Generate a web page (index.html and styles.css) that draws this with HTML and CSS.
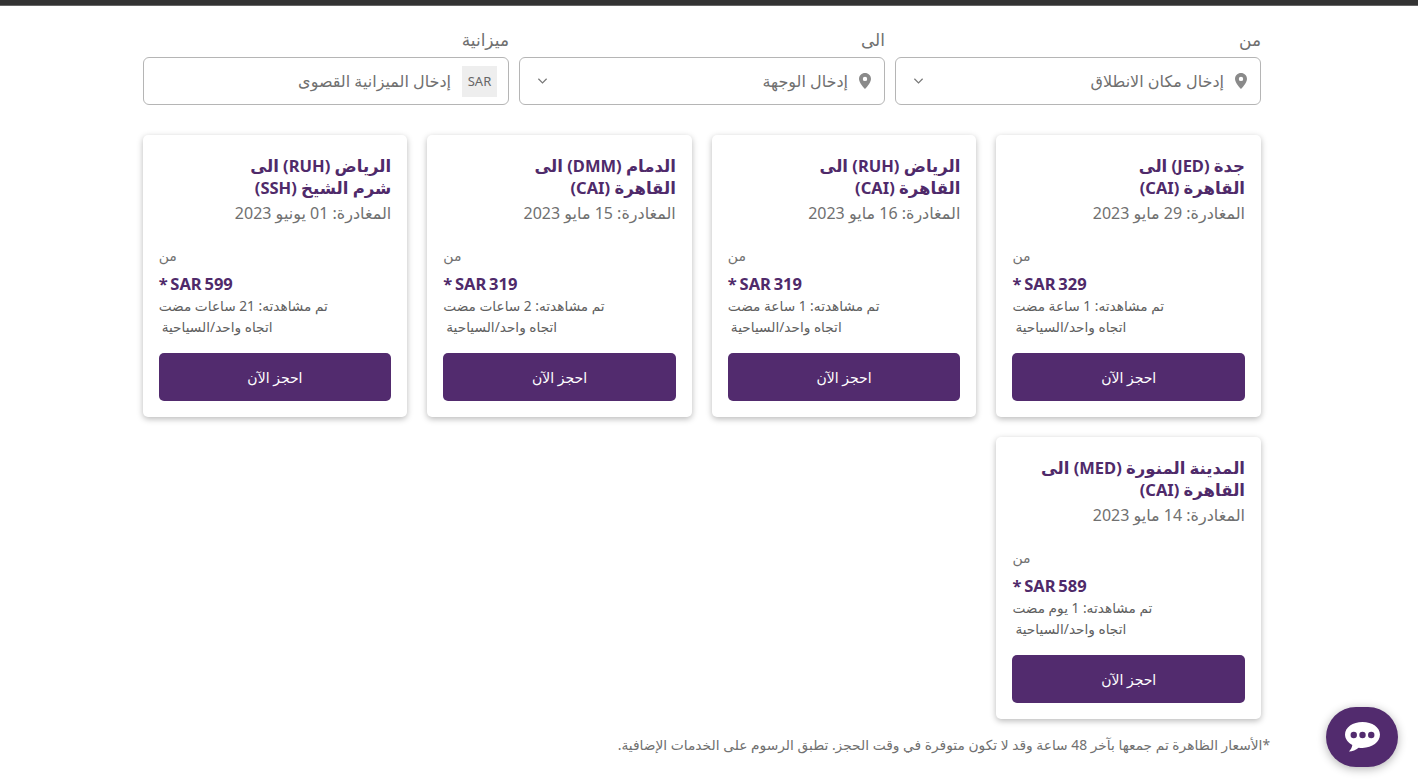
FILE: index.html
```html
<!DOCTYPE html>
<html lang="ar" dir="rtl">
<head>
<meta charset="utf-8">
<title>عروض</title>
<link rel="stylesheet" href="styles.css">
</head>
<body>
<div class="topbar"></div>
<main class="wrap">
  <section class="filters">
    <div class="field">
      <label class="field-label">من</label>
      <div class="input">
        <svg class="pin" viewBox="0 0 12 16"><path d="M6 0C2.7 0 0 2.6 0 5.9 0 10 6 16 6 16s6-6 6-10.100C12 2.600 9.300 0 6 0zm0 8.100a2.200 2.200 0 1 1 0-4.400 2.200 2.200 0 0 1 0 4.400z"/></svg>
        <span class="placeholder">إدخال مكان الانطلاق</span>
        <svg class="chev" viewBox="0 0 12 8"><path d="M1.500 1.500 6 6l4.500-4.500"/></svg>
      </div>
    </div>
    <div class="field">
      <label class="field-label">الى</label>
      <div class="input">
        <svg class="pin" viewBox="0 0 12 16"><path d="M6 0C2.7 0 0 2.6 0 5.9 0 10 6 16 6 16s6-6 6-10.100C12 2.600 9.300 0 6 0zm0 8.100a2.200 2.200 0 1 1 0-4.400 2.200 2.200 0 0 1 0 4.400z"/></svg>
        <span class="placeholder">إدخال الوجهة</span>
        <svg class="chev" viewBox="0 0 12 8"><path d="M1.500 1.500 6 6l4.500-4.500"/></svg>
      </div>
    </div>
    <div class="field">
      <label class="field-label">ميزانية</label>
      <div class="input">
        <span class="currency">SAR</span>
        <span class="placeholder">إدخال الميزانية القصوى</span>
      </div>
    </div>
  </section>

  <section class="cards">
    <article class="card">
      <h3 class="route">جدة (JED) الى<br>القاهرة (CAI)</h3>
      <p class="date">المغادرة: 29 مايو 2023</p>
      <p class="from">من</p>
      <p class="price"><bdi>* SAR 329</bdi></p>
      <p class="meta">تم مشاهدته: 1 ساعة مضت</p>
      <p class="meta trip">اتجاه واحد/السياحية</p>
      <button class="book">احجز الآن</button>
    </article>
    <article class="card">
      <h3 class="route">الرياض (RUH) الى<br>القاهرة (CAI)</h3>
      <p class="date">المغادرة: 16 مايو 2023</p>
      <p class="from">من</p>
      <p class="price"><bdi>* SAR 319</bdi></p>
      <p class="meta">تم مشاهدته: 1 ساعة مضت</p>
      <p class="meta trip">اتجاه واحد/السياحية</p>
      <button class="book">احجز الآن</button>
    </article>
    <article class="card">
      <h3 class="route">الدمام (DMM) الى<br>القاهرة (CAI)</h3>
      <p class="date">المغادرة: 15 مايو 2023</p>
      <p class="from">من</p>
      <p class="price"><bdi>* SAR 319</bdi></p>
      <p class="meta">تم مشاهدته: 2 ساعات مضت</p>
      <p class="meta trip">اتجاه واحد/السياحية</p>
      <button class="book">احجز الآن</button>
    </article>
    <article class="card">
      <h3 class="route">الرياض (RUH) الى<br>شرم الشيخ (SSH)</h3>
      <p class="date">المغادرة: 01 يونيو 2023</p>
      <p class="from">من</p>
      <p class="price"><bdi>* SAR 599</bdi></p>
      <p class="meta">تم مشاهدته: 21 ساعات مضت</p>
      <p class="meta trip">اتجاه واحد/السياحية</p>
      <button class="book">احجز الآن</button>
    </article>
    <article class="card">
      <h3 class="route">المدينة المنورة (MED) الى<br>القاهرة (CAI)</h3>
      <p class="date">المغادرة: 14 مايو 2023</p>
      <p class="from">من</p>
      <p class="price"><bdi>* SAR 589</bdi></p>
      <p class="meta">تم مشاهدته: 1 يوم مضت</p>
      <p class="meta trip">اتجاه واحد/السياحية</p>
      <button class="book">احجز الآن</button>
    </article>
  </section>

  <p class="note">*الأسعار الظاهرة تم جمعها بآخر 48 ساعة وقد لا تكون متوفرة في وقت الحجز. تطبق الرسوم على الخدمات الإضافية.</p>
</main>
<button class="chat" aria-label="chat">
  <svg viewBox="0 0 38 34"><path d="M19 1C9 1 1 6.500 1 14c0 4.500 3 8.300 7.500 10.800-.3 2.500-1.500 4.700-3.500 6.700 3.700-.3 7.200-1.700 10-4 1.300.2 2.600.3 4 .3 10 0 18-6.300 18-13.800S29 1 19 1z" fill="#fff"/><circle cx="10" cy="14.500" r="3.300" fill="#522b6e"/><circle cx="19" cy="14.500" r="3.300" fill="#522b6e"/><circle cx="28" cy="14.500" r="3.300" fill="#522b6e"/></svg>
</button>
</body>
</html>
```
FILE: styles.css
```css
* { box-sizing: border-box; }
html, body { margin: 0; padding: 0; height: 782px; overflow: hidden; background: #fff; }
body { font-family: "Noto Sans", "DejaVu Sans", sans-serif; color: #555; }
p, h3 { margin: 0; }

.topbar { height: 6px; background: #333; border-bottom: 1px solid #666; }

.wrap { width: 1118px; margin: 0 157px 0 143px; padding-top: 24px; }

.filters { display: grid; grid-template-columns: repeat(3, 366px); gap: 10px; }
.field-label { display: block; height: 27px; font-size: 17px; line-height: 20px; color: #707070; }
.input { height: 48px; display: flex; align-items: center; gap: 11px; padding: 0 13px; border: 1px solid #b5b5b5; border-radius: 6px; background: #fff; }
.pin { width: 12px; height: 16px; flex: none; fill: #8a8a8a; }
.placeholder { font-size: 16px; color: #707070; }
.chev { width: 11px; height: 8px; flex: none; margin-right: auto; margin-left: 4px; fill: none; stroke: #777; stroke-width: 1.300; }
.currency { width: 35px; height: 31px; margin-right: -2px; flex: none; display: flex; align-items: center; justify-content: center; background: #eee; font-size: 13px; color: #666; }

.cards { display: grid; grid-template-columns: repeat(4, 264.600px); gap: 20px; margin-top: 30px; }
.card { height: 282px; display: flex; flex-direction: column; padding: 20px 16px 16px; background: #fff; border-radius: 5px; box-shadow: 0 2px 6px rgba(0,0,0,.28); }
.route { font-size: 16.500px; line-height: 22px; font-weight: 700; color: #4f2a6a; }
.date { margin-top: 3px; font-size: 16px; line-height: 22px; color: #707070; }
.from { margin-top: 22px; font-size: 14px; line-height: 20px; color: #707070; text-align: left; }
.price { margin-top: 7px; font-size: 16.500px; line-height: 22px; font-weight: 700; color: #4f2a6a; text-align: left; word-spacing: -1.500px; }
.meta { font-size: 13.700px; line-height: 21px; color: #606060; text-align: left; }
.trip { padding-left: 3px; }
.book { margin-top: auto; height: 48px; border: 0; border-radius: 5px; background: #522b6e; color: #fff; font-family: inherit; font-size: 14px; font-weight: 500; }

.note { margin: 16px -9px 0 0; font-size: 13.800px; line-height: 20px; color: #707070; white-space: nowrap; }

.chat { position: fixed; left: 1326px; top: 707px; width: 72px; height: 60px; padding: 0; border: 0; border-radius: 30px; background: #522b6e; box-shadow: 0 2px 10px rgba(0,0,0,.3); display: flex; align-items: center; justify-content: center; }
.chat svg { width: 37px; height: 33px; }
```
